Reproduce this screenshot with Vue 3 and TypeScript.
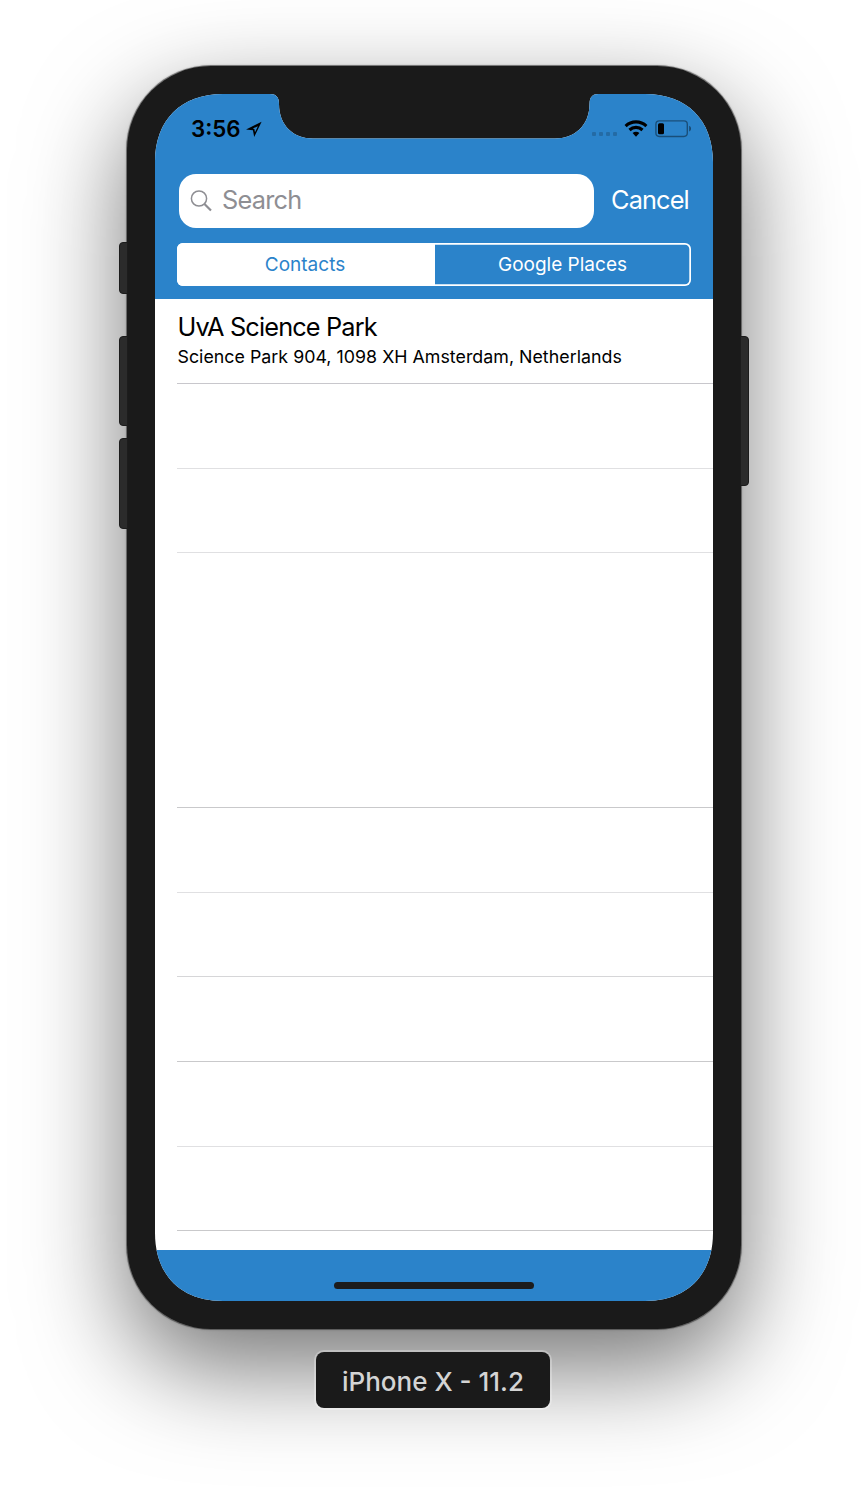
<script setup lang="ts">
interface Row {
  height: number
  tone: 'strong' | 'soft' | 'mid'
}

const emptyRows: Row[] = [
  { height: 85, tone: 'soft' },
  { height: 84, tone: 'soft' },
  { height: 255, tone: 'strong' },
  { height: 85, tone: 'soft' },
  { height: 84, tone: 'mid' },
  { height: 85, tone: 'strong' },
  { height: 85, tone: 'soft' },
  { height: 84, tone: 'strong' },
]
</script>

<template>
  <div class="stage">
    <div class="phone">
      <span class="key mute"></span>
      <span class="key vol-up"></span>
      <span class="key vol-down"></span>
      <span class="key power"></span>
      <div class="body">
        <div class="screen">
          <header class="header">
            <div class="status">
              <span class="time">3:56</span>
              <svg class="loc" width="16" height="16" viewBox="0 0 16 16">
                <path fill-rule="evenodd" d="M0 8.600 15.600 .8 8.200 16 6.900 9.300ZM8.400 8 9 11.200 11.900 5.200 6.800 7.600Z" fill="#000" />
              </svg>
              <span class="dots"><i v-for="n in 4" :key="n"></i></span>
              <svg class="wifi" width="24" height="18" viewBox="0 0 24 18">
                <g fill="none" stroke="#000" stroke-width="3.1">
                  <path d="M1.600 6.100C7.500.5 16.500.5 22.400 6.100" />
                  <path d="M5.500 10C9.200 6.500 14.800 6.500 18.500 10" />
                </g>
                <path d="M8.600 13.100C10.500 11.400 13.500 11.400 15.400 13.100L12 16.700Z" fill="#000" />
              </svg>
              <svg class="battery" width="38" height="18" viewBox="0 0 38 18">
                <rect x=".9" y=".9" width="31.400" height="15.600" rx="3.400" fill="none" stroke="#000" stroke-opacity=".4" stroke-width="1.400" />
                <rect x="3" y="3.200" width="6" height="11" rx="1.500" fill="#000" />
                <path d="M34.200 5.800C36.600 7 36.600 10.400 34.200 11.600Z" fill="#000" fill-opacity=".45" />
              </svg>
            </div>
            <div class="search-row">
              <div class="search">
                <svg width="24" height="24" viewBox="0 0 24 24" fill="none" stroke="#8e8e93">
                  <circle cx="10" cy="9.500" r="7.600" stroke-width="1.500" />
                  <path d="M15.500 15 22 21.500" stroke-width="2.200" />
                </svg>
                <span class="placeholder">Search</span>
              </div>
              <span class="cancel">Cancel</span>
            </div>
            <div class="segments">
              <div class="segment active"><span>Contacts</span></div>
              <div class="segment"><span>Google Places</span></div>
            </div>
          </header>
          <main class="list">
            <div class="row result">
              <div class="title">UvA Science Park</div>
              <div class="address">Science Park 904, 1098 XH Amsterdam, Netherlands</div>
            </div>
            <div v-for="(row, i) in emptyRows" :key="i" class="row" :class="row.tone" :style="{ height: row.height + 'px' }"></div>
          </main>
          <footer class="footer"><span class="home"></span></footer>
        </div>
      </div>
    </div>
    <div class="label"><span>iPhone X - 11.2</span></div>
  </div>
</template>

<style>
body {
  margin: 0;
  background: #fff;
}
</style>

<style scoped>
* {
  box-sizing: border-box;
}
.stage {
  width: 868px;
  height: 1492px;
  padding-top: 66px;
  overflow: hidden;
  display: flex;
  flex-direction: column;
  align-items: center;
  font-family: Inter, "Liberation Sans", sans-serif;
  white-space: nowrap;
}
.phone {
  position: relative;
  width: 614px;
  height: 1263px;
  flex: none;
  border-radius: 84px;
  box-shadow: 0 38px 100px rgba(0, 0, 0, 0.55);
}
.body {
  position: relative;
  height: 1263px;
  padding: 28px;
  border-radius: 84px;
  background: #1a1a1a;
  box-shadow: 0 0 0 1px rgba(70, 70, 70, 0.6), 0 0 2px 1px rgba(0, 0, 0, 0.2);
}
.key {
  position: absolute;
  z-index: 1;
  width: 9px;
  left: -8px;
  border-radius: 4px 0 0 4px;
  background: #2b2b2b;
  border: 1px solid #1c1c1c;
}
.mute { top: 176px; height: 52px; }
.vol-up { top: 270px; height: 90px; }
.vol-down { top: 372px; height: 91px; }
.power {
  top: 270px;
  height: 150px;
  left: auto;
  right: -8px;
  border-radius: 0 4px 4px 0;
}
.screen {
  width: 558px;
  height: 1207px;
  display: flex;
  flex-direction: column;
  background: #fff;
  clip-path: path("M0 68C0 26 26 0 68 0H115C121 0 124 3 124 10C124 32 139 44.500 158 44.500H400C419 44.500 434.500 32 434.500 10C434.500 3 437.500 0 443.500 0H490C532 0 558 26 558 68V1139C558 1181 532 1207 490 1207H68C26 1207 0 1181 0 1139Z");
}
.header {
  height: 205px;
  flex: none;
  background: #2b83ca;
}
.status {
  height: 80px;
  padding: 12px 20px 0 36px;
  display: flex;
  align-items: center;
}
.status svg { flex: none; }
.time {
  width: 54px;
  margin-top: -23px;
  font-size: 22.300px;
  font-weight: 600;
  line-height: 28px;
}
.loc { margin: -22px 0 0 1px; }
.dots {
  display: flex;
  gap: 3px;
  margin: -12px 7px 0 auto;
}
.dots i {
  width: 4px;
  height: 4px;
  border-radius: 1px;
  background: #246ba5;
}
.wifi { margin: -23px 7px 0 0; }
.battery { margin-top: -23px; }
.search-row {
  display: flex;
  align-items: center;
  height: 54px;
  padding: 0 24px;
}
.search {
  width: 415px;
  height: 54px;
  flex: none;
  padding-left: 10px;
  display: flex;
  align-items: center;
  border-radius: 17px;
  background: #fff;
}
.placeholder {
  margin: -3px 0 0 9px;
  color: #8e8e93;
  font-size: 25.300px;
  letter-spacing: -0.750px;
}
.cancel {
  margin: -3px 0 0 17px;
  color: #fff;
  font-size: 25.300px;
  letter-spacing: -0.850px;
}
.segments {
  position: relative;
  display: flex;
  width: 514px;
  height: 43.500px;
  margin: 14.500px 0 0 22px;
  border-radius: 6px;
  overflow: hidden;
  box-shadow: inset 0 0 0 1.700px #fff;
}
.segment {
  width: 256px;
  padding-right: 1px;
  display: flex;
  align-items: center;
  justify-content: center;
  color: #fff;
  font-size: 19px;
}
.segment.active {
  width: 258px;
  padding-right: 2px;
  background: #fff;
  color: #2b83ca;
}
.list {
  height: 951px;
  flex: none;
  padding-left: 22px;
}
.row {
  border-bottom: 1px solid #c8c7cc;
}
.row.soft { border-color: #e0e0e2; }
.row.mid { border-color: #d6d6d8; }
.row.strong { border-color: #c9c9cb; }
.result {
  height: 85px;
  padding-top: 12px;
  color: #000;
}
.title {
  font-size: 25.300px;
  line-height: 31px;
  letter-spacing: -0.850px;
  padding-left: 0.500px;
}
.address {
  padding-left: 0.500px;
  font-size: 17.800px;
  line-height: 29px;
  letter-spacing: 0.025px;
}
.footer {
  height: 51px;
  flex: none;
  display: flex;
  justify-content: center;
  padding-top: 32px;
  background: #2b83ca;
}
.home {
  width: 200px;
  height: 7px;
  border-radius: 4px;
  background: #1c1c1c;
}
.label {
  position: relative;
  width: 234px;
  height: 56px;
  margin: 23px 2px 0 0;
  padding-top: 2px;
  flex: none;
  display: flex;
  align-items: center;
  justify-content: center;
  border-radius: 8px;
  background: #1a1a1a;
  color: #d4d4d4;
  box-shadow: 0 0 0 2px rgba(255, 255, 255, 0.28);
  font-size: 26px;
  font-weight: 500;
}
</style>
